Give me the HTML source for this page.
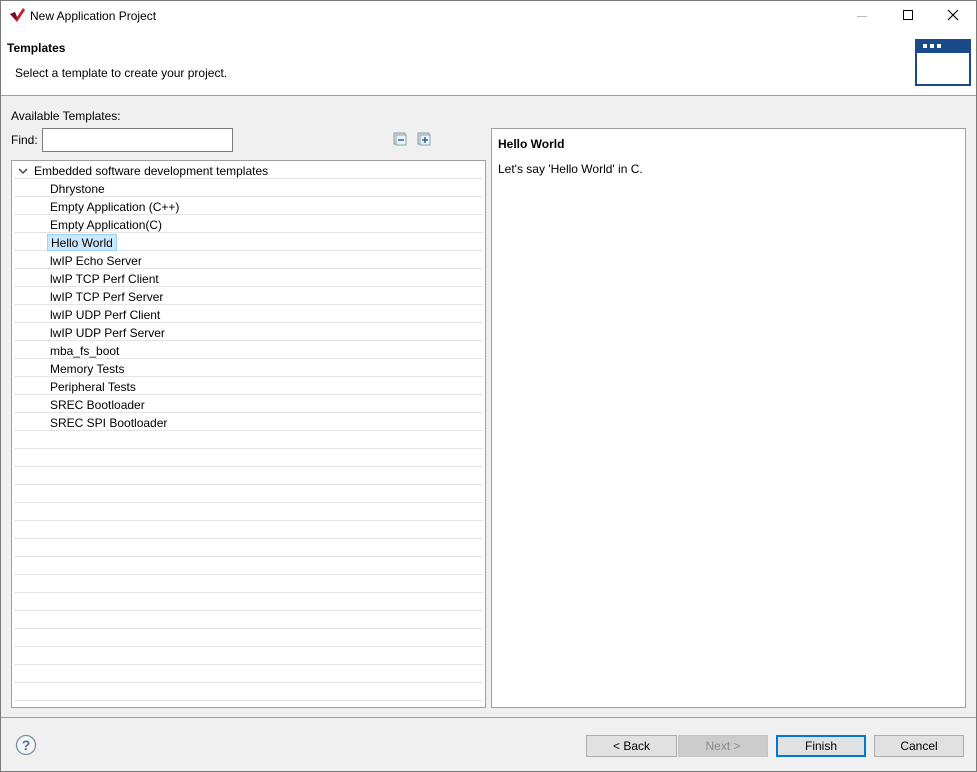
<!DOCTYPE html>
<html><head><meta charset="utf-8"><style>
*{box-sizing:border-box;margin:0;padding:0}
body{width:977px;height:772px;background:#f0f0f0;font-family:"Liberation Sans",sans-serif;font-size:12px;color:#000;position:relative;overflow:hidden}
.win{position:absolute;left:0;top:0;width:977px;height:772px;border:1px solid #7a7a7a}
.abs{position:absolute}
.title{left:1px;top:1px;width:975px;height:30px;background:#fff}
.hdr{left:1px;top:31px;width:975px;height:65px;background:#fff;border-bottom:1px solid #a0a0a0}
.tree{left:11px;top:160px;width:475px;height:548px;background:#fff;border:1px solid #a0a0a0;overflow:hidden}
.row{position:absolute;left:2px;width:469px;height:18px;border-bottom:1px solid #e4e4e4;line-height:20px}
.right{left:491px;top:128px;width:475px;height:580px;background:#fff;border:1px solid #a0a0a0}
.btn{position:absolute;top:735px;height:22px;border:1px solid #adadad;background:#e1e1e1;text-align:center;line-height:20px}
</style></head><body>
<div class="win"></div>
<div class="abs title">
<svg class="abs" style="left:8px;top:7px" width="17" height="15" viewBox="0 0 17 15"><path d="M1 6 L6 4 L8 9 L14 0 L16 2 L8 14 Z" fill="#c41e2a"/><path d="M1 6 L6 4 L8 9 L7 12 Z" fill="#6a1030"/></svg>
<div class="abs" style="left:29px;top:8px;font-size:12px">New Application Project</div>
<div class="abs" style="left:856px;top:15px;width:10px;height:1px;background:#bbb"></div>
<div class="abs" style="left:902px;top:9px;width:10px;height:10px;border:1px solid #000"></div>
<svg class="abs" style="left:946px;top:8px" width="12" height="12"><path d="M1 1L11 11M11 1L1 11" stroke="#000" stroke-width="1.2"/></svg>
</div>
<div class="abs hdr">
<div class="abs" style="left:6px;top:10px;font-weight:bold;font-size:12px">Templates</div>
<div class="abs" style="left:14px;top:35px">Select a template to create your project.</div>
<div class="abs" style="left:914px;top:8px;width:56px;height:47px;border:2px solid #1a4a8a;background:#fff"><div style="height:12px;background:#1a4a8a;position:relative"><span style="position:absolute;left:6px;top:3px;width:4px;height:4px;background:#fff"></span><span style="position:absolute;left:13px;top:3px;width:4px;height:4px;background:#fff"></span><span style="position:absolute;left:20px;top:3px;width:4px;height:4px;background:#fff"></span></div></div>
</div>
<div class="abs" style="left:11px;top:109px">Available Templates:</div>
<div class="abs" style="left:11px;top:133px">Find:</div>
<div class="abs" style="left:42px;top:128px;width:191px;height:24px;background:#fff;border:1px solid #7a7a7a"></div>
<svg class="abs" style="left:393px;top:132px" width="40" height="16"><rect x="1" y="1" width="11" height="11" fill="#dde" stroke="#999"/><rect x="3" y="3" width="10" height="10" fill="#e8f4ff" stroke="#8aa"/><path d="M5 8h6" stroke="#1a4a8a" stroke-width="1.3"/><rect x="25" y="1" width="11" height="11" fill="#dde" stroke="#999"/><rect x="27" y="3" width="10" height="10" fill="#e8f4ff" stroke="#8aa"/><path d="M29 8h6M32 5v6" stroke="#1a4a8a" stroke-width="1.3"/></svg>
<div class="abs tree">
<div class="row" style="top:0"><svg style="position:absolute;left:4px;top:7px" width="10" height="7"><path d="M1 1L5 5L9 1" stroke="#444" stroke-width="1.5" fill="none"/></svg><span style="position:absolute;left:20px">Embedded software development templates</span></div>
<div class="row" style="top:18px"><span style="position:absolute;left:36px">Dhrystone</span></div>
<div class="row" style="top:36px"><span style="position:absolute;left:36px">Empty Application (C++)</span></div>
<div class="row" style="top:54px"><span style="position:absolute;left:36px">Empty Application(C)</span></div>
<div class="row" style="top:72px"><span style="position:absolute;left:33px;top:1px;height:17px;padding:0 3px;background:#cce8ff;border:1px solid #99d1ff;line-height:17px">Hello World</span></div>
<div class="row" style="top:90px"><span style="position:absolute;left:36px">lwIP Echo Server</span></div>
<div class="row" style="top:108px"><span style="position:absolute;left:36px">lwIP TCP Perf Client</span></div>
<div class="row" style="top:126px"><span style="position:absolute;left:36px">lwIP TCP Perf Server</span></div>
<div class="row" style="top:144px"><span style="position:absolute;left:36px">lwIP UDP Perf Client</span></div>
<div class="row" style="top:162px"><span style="position:absolute;left:36px">lwIP UDP Perf Server</span></div>
<div class="row" style="top:180px"><span style="position:absolute;left:36px">mba_fs_boot</span></div>
<div class="row" style="top:198px"><span style="position:absolute;left:36px">Memory Tests</span></div>
<div class="row" style="top:216px"><span style="position:absolute;left:36px">Peripheral Tests</span></div>
<div class="row" style="top:234px"><span style="position:absolute;left:36px">SREC Bootloader</span></div>
<div class="row" style="top:252px"><span style="position:absolute;left:36px">SREC SPI Bootloader</span></div>
<div class="row" style="top:270px"></div><div class="row" style="top:288px"></div><div class="row" style="top:306px"></div><div class="row" style="top:324px"></div><div class="row" style="top:342px"></div><div class="row" style="top:360px"></div><div class="row" style="top:378px"></div><div class="row" style="top:396px"></div><div class="row" style="top:414px"></div><div class="row" style="top:432px"></div><div class="row" style="top:450px"></div><div class="row" style="top:468px"></div><div class="row" style="top:486px"></div><div class="row" style="top:504px"></div><div class="row" style="top:522px"></div>
</div>
<div class="abs right">
<div class="abs" style="left:6px;top:8px;font-weight:bold">Hello World</div>
<div class="abs" style="left:6px;top:33px">Let's say 'Hello World' in C.</div>
</div>
<div class="abs" style="left:1px;top:717px;width:975px;height:1px;background:#a0a0a0"></div>
<svg class="abs" style="left:15px;top:734px" width="22" height="22"><circle cx="11" cy="11" r="9.5" fill="#f4f6f8" stroke="#7890a8" stroke-width="1.3"/><text x="11" y="16" font-family="Liberation Sans" font-size="14" font-weight="bold" fill="#5a7090" text-anchor="middle">?</text></svg>
<div class="btn" style="left:586px;width:91px">&lt; Back</div>
<div class="btn" style="left:678px;width:90px;background:#cccccc;color:#8a8a8a;border-color:#c4c4c4">Next &gt;</div>
<div class="btn" style="left:776px;width:90px;border:2px solid #0078d7;line-height:18px">Finish</div>
<div class="btn" style="left:874px;width:90px">Cancel</div>
</body></html>
